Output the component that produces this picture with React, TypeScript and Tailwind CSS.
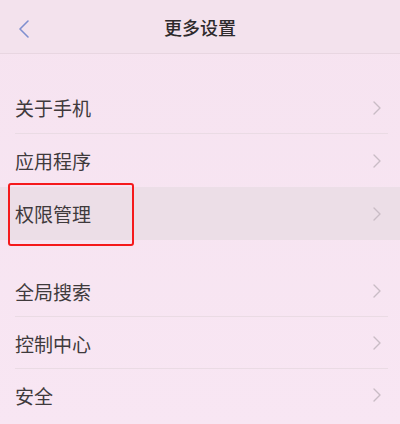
import React from "react";

const Chevron = () => (
  <svg width="10" height="16" viewBox="0 0 10 16" fill="none">
    <path d="M2 2 L8 8 L2 14" stroke="#c9bcc5" strokeWidth="1.4" strokeLinecap="round" strokeLinejoin="round" />
  </svg>
);

const Row = ({
  label,
  divider = true,
  highlight = false,
  h = "h-[53px]",
}: {
  label: string;
  divider?: boolean;
  highlight?: boolean;
  h?: string;
}) => (
  <div className={`relative ${h} flex items-center pl-[15px] pr-[18px] ${highlight ? "bg-[#ecdee7]" : ""}`}>
    <span className="flex-1 text-[19px] text-[#3f3a3c] leading-none">{label}</span>
    <Chevron />
    {divider && <div className="absolute left-[15px] right-[12px] bottom-0 h-px bg-[#eadbe4]" />}
  </div>
);

export default function App() {
  return (
    <div
      className="w-[400px] h-[424px] overflow-hidden bg-gradient-to-b from-[#f6e3f0] to-[#f8e6f3]"
      style={{ fontFamily: '"Noto Sans CJK SC", "Noto Sans", sans-serif' }}
    >
      <div className="relative h-[54px] flex items-center justify-center bg-[#f3e2ed] border-b border-[#e8d6e1]">
        <svg className="absolute left-[17px] top-[19px]" width="14" height="20" viewBox="0 0 14 20" fill="none">
          <path d="M11 2 L3 10 L11 18" stroke="#7f8fcf" strokeWidth="1.6" strokeLinecap="round" strokeLinejoin="round" />
        </svg>
        <span className="text-[18px] text-[#2e2a2c] font-medium leading-none">更多设置</span>
      </div>
      <div className="pt-[27px]">
        <Row label="关于手机" />
        <Row label="应用程序" divider={false} />
        <div className="relative">
          <Row label="权限管理" divider={false} highlight />
          <div className="absolute left-[8px] top-[-4px] w-[126px] h-[63px] border-2 border-[#f5191c] rounded-[3px]" />
        </div>
        <div className="h-[25px]" />
        <Row label="全局搜索" h="h-[52px]" />
        <Row label="控制中心" h="h-[52px]" />
        <Row label="安全" divider={false} h="h-[52px]" />
      </div>
    </div>
  );
}
